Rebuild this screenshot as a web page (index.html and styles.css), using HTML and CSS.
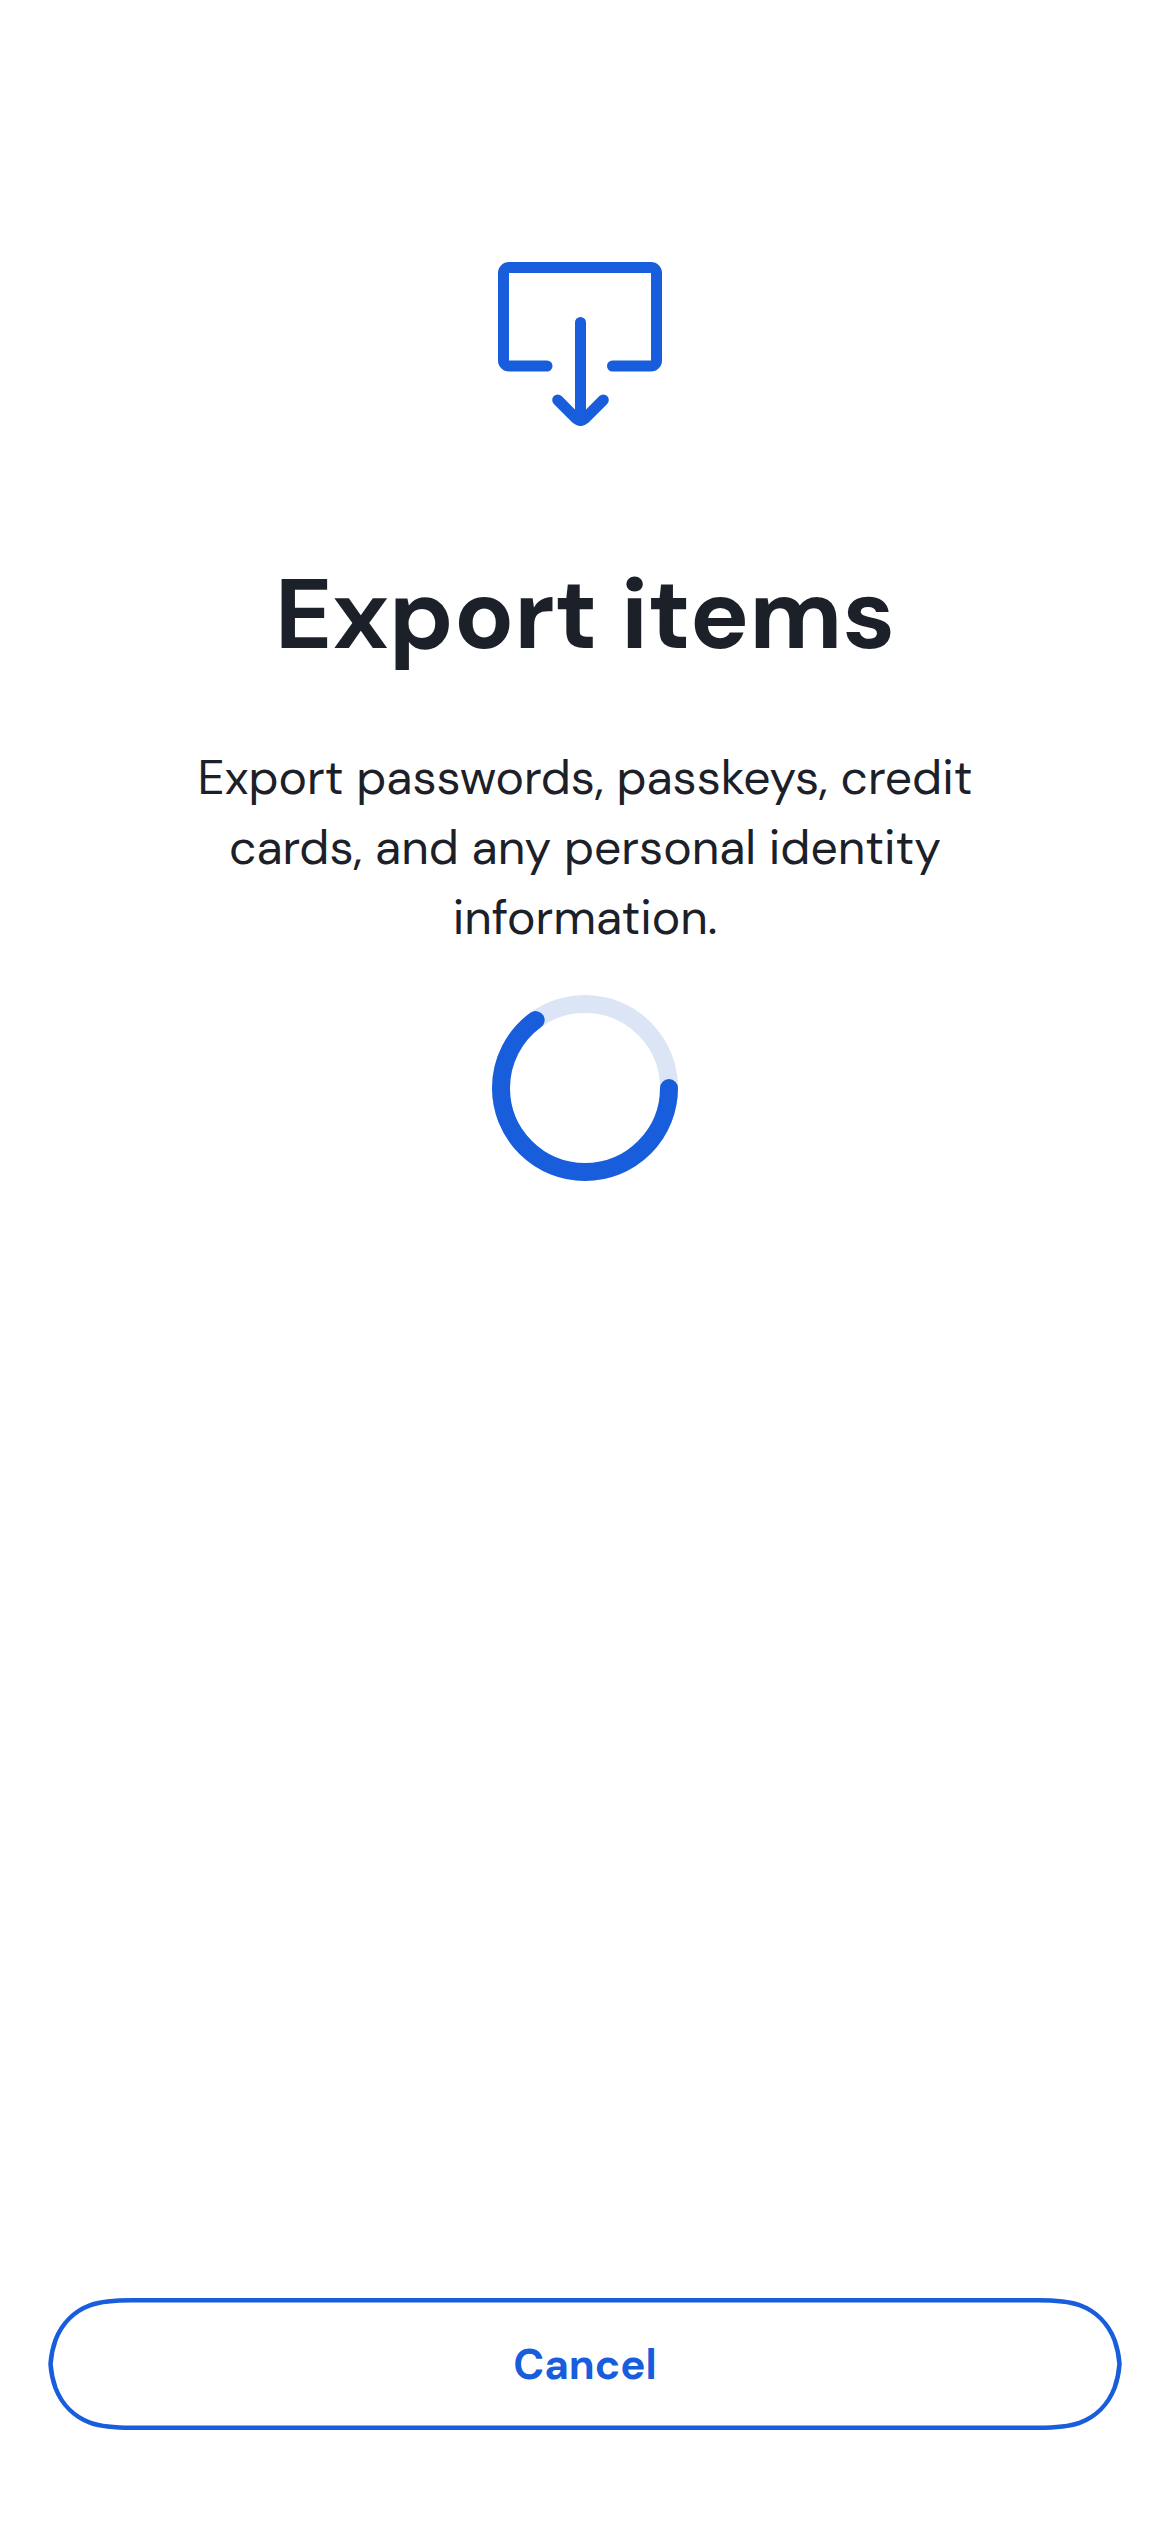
FILE: index.html
```html
<!DOCTYPE html>
<html lang="en">
<head>
<meta charset="utf-8">
<title>Export items</title>
<link rel="stylesheet" href="styles.css">
</head>
<body>
<main class="screen">
  <svg class="export-icon" viewBox="0 0 164 164" aria-hidden="true">
    <path d="M49 104H11A5.500 5.500 0 0 1 5.500 98.500V11A5.500 5.500 0 0 1 11 5.500H153A5.500 5.500 0 0 1 158.500 11V98.500A5.500 5.500 0 0 1 153 104H114.500M82.500 60.500V158M59.700 138L78.500 156.800Q82.500 160 86.500 156.800L105.300 138"/>
  </svg>
  <h1 class="title">Export items</h1>
  <p class="description">
    <span class="line">Export passwords, passkeys, credit</span>
    <span class="line">cards, and any personal identity</span>
    <span class="line">information.</span>
  </p>
  <svg class="spinner" viewBox="0 0 186 186" role="progressbar" aria-label="Loading">
    <circle class="spinner-track" cx="93" cy="93" r="84"/>
    <circle class="spinner-arc" cx="93" cy="93" r="84" pathLength="100" stroke-dasharray="65 100"/>
  </svg>
  <button class="cancel" type="button">
    <svg class="cancel-outline" viewBox="0 0 1074 132" aria-hidden="true">
      <path d="M84 2.300H990C1009 2.300 1021 3.500 1031.500 7.200C1047.500 13 1060.200 25.700 1066.500 42C1069.200 49.500 1070.900 57.500 1071.500 66C1070.900 74.500 1069.200 82.500 1066.500 90C1060.200 106.300 1047.500 119 1031.500 124.800C1021 128.500 1009 129.700 990 129.700H84C65 129.700 53 128.500 42.500 124.800C26.500 119 13.800 106.300 7.500 90C4.800 82.500 3.100 74.500 2.500 66C3.100 57.500 4.800 49.500 7.500 42C13.800 25.700 26.500 13 42.500 7.200C53 3.500 65 2.300 84 2.300Z"/>
    </svg>
    <span class="cancel-label">Cancel</span>
  </button>
</main>
</body>
</html>
```
FILE: styles.css
```css
* {
  box-sizing: border-box;
}

body {
  margin: 0;
  background: #fff;
  color: #1b2029;
  font-family: "DM Sans", Inter, sans-serif;
}

.screen {
  display: flex;
  flex-direction: column;
  align-items: center;
  height: 2532px;
  padding: 262px 48px 102px;
}

.export-icon {
  width: 164px;
  height: 164px;
  margin-right: 10px;
  fill: none;
  stroke: #175ddc;
  stroke-width: 11;
  stroke-linecap: round;
  stroke-linejoin: round;
}

.title {
  margin: 129px 0 0;
  font-size: 99px;
  font-weight: 700;
  line-height: 120px;
  white-space: nowrap;
}

.description {
  margin: 68px 0 0;
  font-size: 48px;
  line-height: 70px;
  text-align: center;
}

.line {
  display: block;
  white-space: nowrap;
}

.spinner {
  width: 186px;
  height: 186px;
  margin-top: 42px;
  fill: none;
  stroke-width: 18;
}

.spinner-track {
  stroke: #dbe5f6;
}

.spinner-arc {
  stroke: #175ddc;
  stroke-linecap: round;
}

.cancel {
  position: relative;
  width: 1074px;
  height: 132px;
  margin-top: auto;
  padding: 1px 0 0;
  border: 0;
  background: none;
  color: #175ddc;
  font: 700 42px/52px "DM Sans", Inter, sans-serif;
}

.cancel-outline {
  position: absolute;
  inset: 0;
  fill: none;
  stroke: #175ddc;
  stroke-width: 4.5;
}
```
